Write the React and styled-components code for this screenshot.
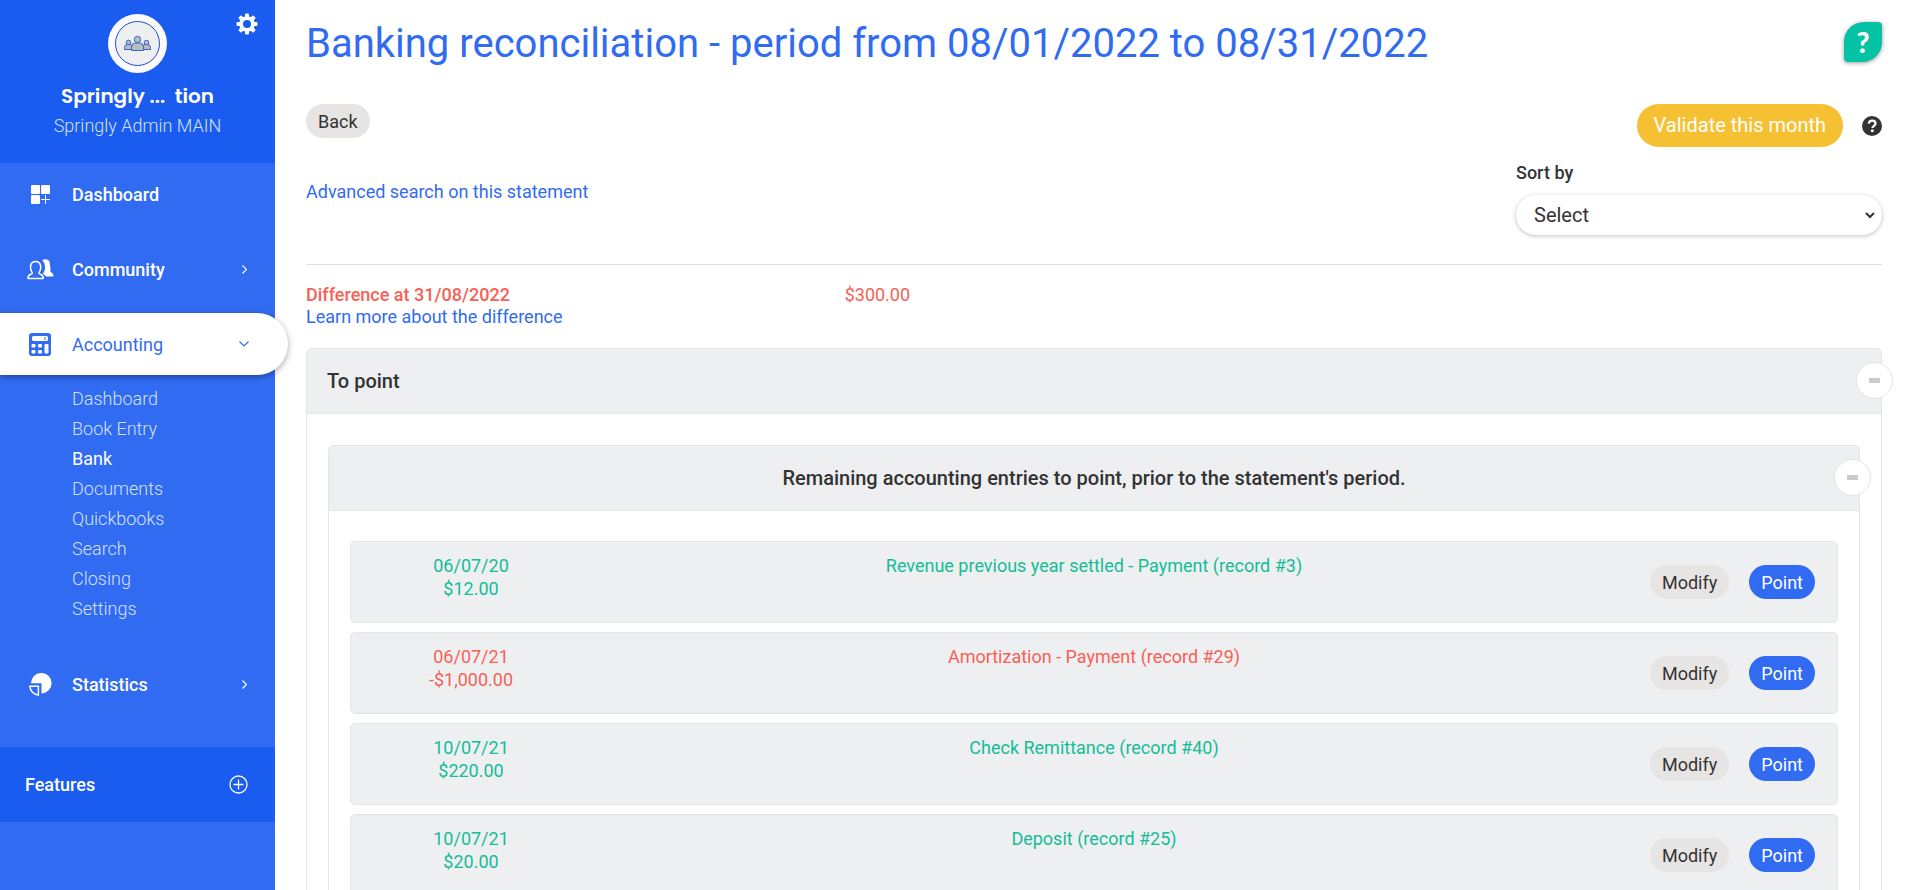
import React from 'react';
import styled, { createGlobalStyle } from 'styled-components';

const colors = {
  blue: '#316bf2',
  blueDark: '#1a5bf0',
  green: '#14bd98',
  red: '#f85f55',
  teal: '#04c2a4',
  yellow: '#f5c132',
  text: '#333333',
  panel: '#eeeff1',
  border: '#e5e5e5',
  button: '#e7e5e4',
};

const GlobalStyle = createGlobalStyle`
  *,
  *::before,
  *::after {
    box-sizing: border-box;
  }

  body {
    margin: 0;
    background: #fff;
    color: ${colors.text};
    font-family: Roboto, 'Liberation Sans', sans-serif;
    font-size: 18px;
    line-height: 23px;
  }

  h1,
  h2,
  h3,
  p,
  ul {
    margin: 0;
    padding: 0;
  }

  ul {
    list-style: none;
  }

  a {
    color: ${colors.blue};
    text-decoration: none;
  }

  button,
  select {
    border: 0;
    font: inherit;
    cursor: pointer;
  }
`;

const Layout = styled.div`
  display: flex;
  height: 100vh;
  overflow: hidden;
`;

const Sidebar = styled.aside`
  position: relative;
  z-index: 1;
  flex: 0 0 275px;
  min-width: 0;
  background: ${colors.blue};
  color: #fff;
`;

const Profile = styled.header`
  position: relative;
  display: flex;
  flex-direction: column;
  align-items: center;
  height: 163px;
  padding-top: 14px;
  background: ${colors.blueDark};
`;

const SettingsButton = styled.button`
  position: absolute;
  top: 13px;
  right: 17px;
  display: flex;
  padding: 0;
  background: none;
  color: #fff;
`;

const OrgName = styled.strong`
  margin-top: 12px;
  font-family: Poppins, Inter, sans-serif;
  font-size: 20px;
  font-weight: 600;
  white-space: pre;
`;

const UserName = styled.span`
  margin-top: 6px;
  font-weight: 300;
  color: #d3e0fc;
`;

const Nav = styled.nav`
  display: flex;
  flex-direction: column;
  gap: 13px;
`;

const NavItem = styled.a`
  display: flex;
  align-items: center;
  width: 275px;
  height: 62px;
  padding: 0 24px;
  color: #fff;
  font-weight: 500;
`;

const ActiveNavItem = styled(NavItem)`
  width: 288px;
  padding-right: 37px;
  border-radius: 0 31px 31px 0;
  background: #fff;
  box-shadow: 0 2px 6px rgba(0, 0, 0, 0.35);
  color: ${colors.blue};
  font-weight: 400;
`;

const NavIcon = styled.span`
  display: flex;
  justify-content: center;
  width: 32px;
  margin-right: 16px;
`;

const NavLabel = styled.span`
  flex: 1;
`;

const NavChevron = styled.span`
  display: flex;
  justify-content: center;
  width: 14px;
`;

const SubNav = styled.ul`
  padding: 9px 0 16px 72px;
`;

const SubNavLink = styled.a`
  display: block;
  line-height: 30px;
  font-weight: ${(p) => (p.$current ? 400 : 300)};
  color: ${(p) => (p.$current ? '#fff' : '#d3e0fc')};
`;

const Features = styled.button`
  display: flex;
  align-items: center;
  justify-content: space-between;
  width: 100%;
  height: 75px;
  margin-top: 32px;
  padding: 0 27px 0 25px;
  background: ${colors.blueDark};
  color: #fff;
  font-weight: 500;
`;

const Main = styled.main`
  flex: 1;
  min-width: 0;
  padding: 18px 31px 0;
  overflow-y: auto;
  scrollbar-width: none;
`;

const TitleBar = styled.header`
  display: flex;
  align-items: center;
  justify-content: space-between;
  height: 48px;
`;

const Title = styled.h1`
  padding-top: 4px;
  color: ${colors.blue};
  font-size: 40px;
  font-weight: 400;
  line-height: 48px;
`;

const HelpButton = styled.button`
  display: flex;
  align-items: center;
  justify-content: center;
  width: 38px;
  height: 40px;
  padding: 0;
  border-radius: 20px 4px 20px 4px;
  background: ${colors.teal};
  box-shadow: 0 1px 4px rgba(0, 0, 0, 0.4);
  color: #fff;
  font-family: Lato, sans-serif;
  font-size: 28px;
  font-weight: 900;
`;

const Toolbar = styled.div`
  display: flex;
  align-items: flex-start;
  justify-content: space-between;
  margin-top: 38px;
`;

const ToolbarActions = styled.div`
  display: flex;
  align-items: center;
  gap: 19px;
`;

const Button = styled.button`
  height: 34px;
  padding: 0 12px;
  border-radius: 17px;
  background: ${(p) => (p.$primary ? colors.blue : colors.button)};
  color: ${(p) => (p.$primary ? '#fff' : colors.text)};
`;

const ValidateButton = styled.button`
  height: 43px;
  padding: 0 17px;
  border-radius: 22px;
  background: ${colors.yellow};
  color: #fff;
  font-size: 20px;
`;

const HintButton = styled.button`
  display: flex;
  padding: 0;
  background: none;
  color: ${colors.text};
`;

const Filters = styled.div`
  display: flex;
  align-items: flex-start;
  justify-content: space-between;
  margin-top: 14px;
  padding-bottom: 29px;
  border-bottom: 1px solid #e0e0e0;
`;

const SearchLink = styled.a`
  margin-top: 19px;
`;

const SortField = styled.div`
  display: flex;
  flex-direction: column;
  gap: 11px;
  width: 366px;
`;

const SortLabel = styled.label`
  font-weight: 500;
`;

const SortSelect = styled.select`
  width: 100%;
  height: 40px;
  padding-left: 14px;
  border-right: 4px solid transparent;
  border-radius: 20px;
  background-color: #fff;
  box-shadow: 0 1px 4px rgba(0, 0, 0, 0.25);
  color: ${colors.text};
  font-size: 20px;
`;

const Difference = styled.section`
  display: grid;
  grid-template-columns: 1fr 2fr;
  gap: 20px;
  margin-top: 19px;
  color: ${colors.red};
  line-height: 22px;
`;

const DifferenceTitle = styled.h2`
  font-size: 18px;
  font-weight: 500;
  line-height: 22px;
`;

const Panel = styled.section`
  border: 1px solid ${colors.border};
  border-radius: 5px;
`;

const OuterPanel = styled(Panel)`
  margin-top: 20px;
`;

const PanelHeader = styled.header`
  position: relative;
  height: 65px;
  padding: 0 20px;
  border-bottom: 1px solid ${colors.border};
  border-radius: 4px 4px 0 0;
  background: ${colors.panel};
  text-align: ${(p) => (p.$center ? 'center' : 'left')};
`;

const PanelTitle = styled.h2`
  font-size: 20px;
  font-weight: 500;
  line-height: 64px;
`;

const CollapseButton = styled.button`
  position: absolute;
  top: 13px;
  right: -12px;
  display: flex;
  align-items: center;
  justify-content: center;
  width: 37px;
  height: 37px;
  padding: 0;
  border: 1px solid ${colors.border};
  border-radius: 50%;
  background: #fff;
  color: #cccbc9;
`;

const PanelBody = styled.div`
  padding: ${(p) => p.$top} 21px 24px;
`;

const Entries = styled.ul`
  display: grid;
  gap: 9px;
`;

const Entry = styled.li`
  display: grid;
  grid-template-columns: 240px 1fr 240px;
  height: 82px;
  border: 1px solid ${colors.border};
  border-radius: 5px;
  background: ${colors.panel};
  color: ${(p) => (p.$negative ? colors.red : colors.green)};
  text-align: center;
`;

const EntryText = styled.p`
  padding-top: 12px;
`;

const EntryActions = styled.div`
  display: flex;
  align-items: center;
  justify-content: flex-end;
  gap: 20px;
  padding-right: 22px;
`;

const GearIcon = () => (
  <svg width="22" height="22" viewBox="-11 -11 22 22" fill="currentColor">
    {[0, 45, 90, 135].map((angle) => (
      <rect
        key={angle}
        x="-2"
        y="-10.5"
        width="4"
        height="21"
        rx="1"
        transform={`rotate(${angle})`}
      />
    ))}
    <circle r="7.8" />
    <circle r="4" fill={colors.blueDark} />
  </svg>
);

const AvatarIcon = () => (
  <svg width="59" height="59" viewBox="0 0 59 59">
    <circle cx="29.5" cy="29.5" r="29.5" fill="#fbfbfd" />
    <circle cx="29.5" cy="29.5" r="22" fill="#eeeff1" stroke="#1a4fd6" />
    <g fill="#bcbcbc" stroke="#2f66d8" strokeWidth="1">
      <circle cx="20.5" cy="28.5" r="2.3" />
      <path d="M16.5 35.5v-2a3 3 0 0 1 3-3h2a3 3 0 0 1 3 3v2z" />
      <circle cx="38.5" cy="28.5" r="2.3" />
      <path d="M34.5 35.5v-2a3 3 0 0 1 3-3h2a3 3 0 0 1 3 3v2z" />
      <circle cx="29.5" cy="25.5" r="3.2" />
      <path d="M23.5 36.5v-3.5a4 4 0 0 1 4-4h4a4 4 0 0 1 4 4v3.5z" />
    </g>
  </svg>
);

const DashboardIcon = () => (
  <svg width="19" height="19" viewBox="0 0 19 19" fill="currentColor">
    <rect width="9" height="9" rx="1" />
    <rect x="10" width="9" height="9" rx="1" />
    <rect y="10" width="9" height="9" rx="1" />
    <path d="M14 10h1v4h4v1h-4v4h-1v-4h-4v-1h4z" />
  </svg>
);

const CommunityIcon = () => (
  <svg width="27" height="21" viewBox="0 0 27 21">
    <path
      d="M15 1.2C17.5-.4 21.2-.2 22.3 2.3c.9 2.2.5 4.6 1.2 7.2.4 1.6-.7 2.3-.2 3.1.6 1 3.2 1.3 3.2 4.9h-7.5c-.6-1.3-2.300-2-3.200-2.700 1.600-2 2.400-4.300 2.200-7C17.700 4.900 17.200 2.600 15 1.200z"
      fill="currentColor"
    />
    <path
      d="M1 19.5c-.3-3.500 1.500-3.700 3.300-4.400 1.300-.5 1.200-1.500.4-2.500C3.200 10.500 3.300 8 3.900 5.700 4.500 3.600 6.300 2.600 8.600 2.600s4.100 1 4.700 3.100c.6 2.300.7 4.800-.8 6.900-.8 1-.9 2 .4 2.500 1.800.7 3.600.9 3.300 4.400z"
      fill="none"
      stroke="currentColor"
      strokeWidth="1.5"
      strokeLinejoin="round"
    />
  </svg>
);

const CalculatorIcon = () => (
  <svg width="22" height="23" viewBox="0 0 22 23">
    <rect width="22" height="23" rx="3" fill={colors.blue} />
    <rect x="3" y="3" width="16" height="5" rx="1.5" fill="#fff" />
    <path d="M16 4v3" stroke={colors.blue} />
    <g fill="#fff">
      <rect x="2.5" y="11" width="4" height="3.5" rx="1" />
      <rect x="9" y="11" width="4" height="3.5" rx="1" />
      <rect x="2.5" y="17" width="4" height="3.5" rx="1" />
      <rect x="9" y="17" width="4" height="3.5" rx="1" />
      <rect x="15.5" y="11" width="4" height="9.5" rx="1" />
    </g>
  </svg>
);

const StatisticsIcon = () => (
  <svg width="23" height="23" viewBox="0 0 23 23">
    <path d="M2 10.2A10.3 10.3 0 1 1 12.5 20.5V10.2z" fill="currentColor" />
    <path
      d="M.8 13.3h8.6v8.8c-4.7-.4-8.2-4-8.6-8.8z"
      fill="none"
      stroke="currentColor"
      strokeWidth="1.5"
    />
  </svg>
);

const ChevronRight = () => (
  <svg width="5" height="9" viewBox="0 0 5 9" fill="none" stroke="currentColor">
    <path d="M.5.5l4 4-4 4" strokeWidth="1.2" />
  </svg>
);

const ChevronDown = () => (
  <svg width="10" height="6" viewBox="0 0 10 6" fill="none" stroke="currentColor">
    <path d="M.5.5L5 5 9.5.5" strokeWidth="1.2" />
  </svg>
);

const PlusCircleIcon = () => (
  <svg width="19" height="19" viewBox="0 0 19 19" fill="none" stroke="currentColor">
    <circle cx="9.5" cy="9.5" r="8.5" strokeWidth="1.3" />
    <path d="M4.5 9.5h10M9.5 4.5v10" strokeWidth="1.3" />
  </svg>
);

const HintIcon = () => (
  <svg width="20" height="20" viewBox="0 0 20 20">
    <circle cx="10" cy="10" r="10" fill="currentColor" />
    <path
      d="M6.8 7.6C7 5.7 8.3 4.7 10.2 4.7c1.9 0 3.3 1.1 3.3 2.8 0 2.3-3 2.3-3 4.4"
      fill="none"
      stroke="#fff"
      strokeWidth="2.3"
    />
    <circle cx="10.3" cy="14.8" r="1.5" fill="#fff" />
  </svg>
);

const MinusIcon = () => (
  <svg width="11" height="5" viewBox="0 0 11 5" fill="currentColor">
    <rect width="11" height="5" />
  </svg>
);

const accountingLinks = [
  'Dashboard',
  'Book Entry',
  'Bank',
  'Documents',
  'Quickbooks',
  'Search',
  'Closing',
  'Settings',
];

const entries = [
  {
    date: '06/07/20',
    amount: '$12.00',
    label: 'Revenue previous year settled - Payment (record #3)',
  },
  {
    date: '06/07/21',
    amount: '-$1,000.00',
    label: 'Amortization - Payment (record #29)',
    negative: true,
  },
  { date: '10/07/21', amount: '$220.00', label: 'Check Remittance (record #40)' },
  { date: '10/07/21', amount: '$20.00', label: 'Deposit (record #25)' },
];

const SideMenu = () => (
  <Sidebar>
    <Profile>
      <AvatarIcon />
      <OrgName>{'Springly ...  tion'}</OrgName>
      <UserName>Springly Admin MAIN</UserName>
      <SettingsButton aria-label="Settings">
        <GearIcon />
      </SettingsButton>
    </Profile>
    <Nav>
      <NavItem href="#dashboard">
        <NavIcon>
          <DashboardIcon />
        </NavIcon>
        <NavLabel>Dashboard</NavLabel>
      </NavItem>
      <NavItem href="#community">
        <NavIcon>
          <CommunityIcon />
        </NavIcon>
        <NavLabel>Community</NavLabel>
        <NavChevron>
          <ChevronRight />
        </NavChevron>
      </NavItem>
      <div>
        <ActiveNavItem href="#accounting">
          <NavIcon>
            <CalculatorIcon />
          </NavIcon>
          <NavLabel>Accounting</NavLabel>
          <NavChevron>
            <ChevronDown />
          </NavChevron>
        </ActiveNavItem>
        <SubNav>
          {accountingLinks.map((name) => (
            <li key={name}>
              <SubNavLink href="#accounting" $current={name === 'Bank'}>
                {name}
              </SubNavLink>
            </li>
          ))}
        </SubNav>
      </div>
      <NavItem href="#statistics">
        <NavIcon>
          <StatisticsIcon />
        </NavIcon>
        <NavLabel>Statistics</NavLabel>
        <NavChevron>
          <ChevronRight />
        </NavChevron>
      </NavItem>
    </Nav>
    <Features>
      Features
      <PlusCircleIcon />
    </Features>
  </Sidebar>
);

const Collapse = () => (
  <CollapseButton aria-label="Collapse">
    <MinusIcon />
  </CollapseButton>
);

const App = () => (
  <Layout>
    <GlobalStyle />
    <SideMenu />
    <Main>
      <TitleBar>
        <Title>Banking reconciliation - period from 08/01/2022 to 08/31/2022</Title>
        <HelpButton>?</HelpButton>
      </TitleBar>
      <Toolbar>
        <Button>Back</Button>
        <ToolbarActions>
          <ValidateButton>Validate this month</ValidateButton>
          <HintButton aria-label="About validation">
            <HintIcon />
          </HintButton>
        </ToolbarActions>
      </Toolbar>
      <Filters>
        <SearchLink href="#search">Advanced search on this statement</SearchLink>
        <SortField>
          <SortLabel htmlFor="sort">Sort by</SortLabel>
          <SortSelect id="sort">
            <option>Select</option>
          </SortSelect>
        </SortField>
      </Filters>
      <Difference>
        <div>
          <DifferenceTitle>Difference at 31/08/2022</DifferenceTitle>
          <a href="#difference">Learn more about the difference</a>
        </div>
        <span>$300.00</span>
      </Difference>
      <OuterPanel>
        <PanelHeader>
          <PanelTitle>To point</PanelTitle>
          <Collapse />
        </PanelHeader>
        <PanelBody $top="31px">
          <Panel>
            <PanelHeader $center>
              <PanelTitle as="h3">
                Remaining accounting entries to point, prior to the statement's period.
              </PanelTitle>
              <Collapse />
            </PanelHeader>
            <PanelBody $top="30px">
              <Entries>
                {entries.map((entry) => (
                  <Entry key={entry.label} $negative={entry.negative}>
                    <EntryText>
                      {entry.date}
                      <br />
                      {entry.amount}
                    </EntryText>
                    <EntryText>{entry.label}</EntryText>
                    <EntryActions>
                      <Button>Modify</Button>
                      <Button $primary>Point</Button>
                    </EntryActions>
                  </Entry>
                ))}
              </Entries>
            </PanelBody>
          </Panel>
        </PanelBody>
      </OuterPanel>
    </Main>
  </Layout>
);

export default App;
